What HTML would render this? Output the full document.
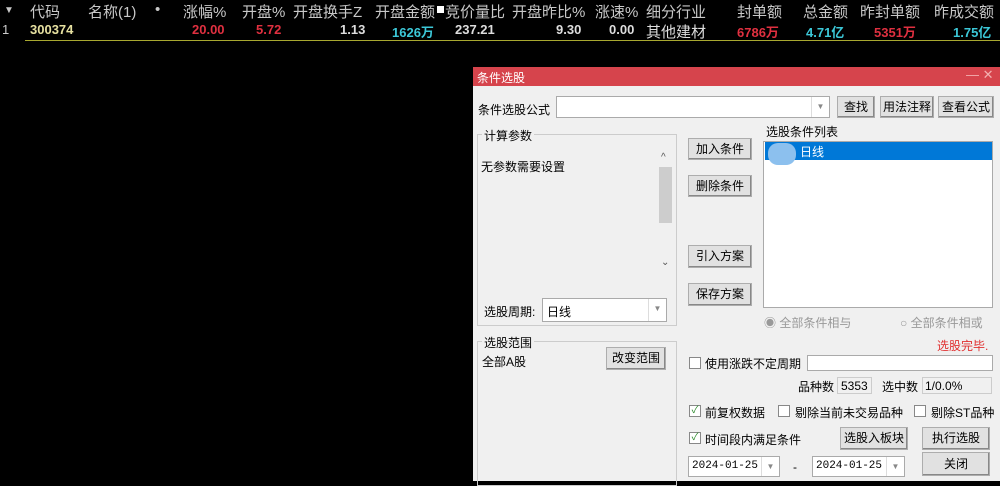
<!DOCTYPE html><html><head><meta charset="utf-8"><style>
*{margin:0;padding:0;box-sizing:border-box}
body{width:1000px;height:481px;background:#000;position:relative;overflow:hidden;font-family:"Liberation Sans","Noto Sans CJK SC",sans-serif}
.a{position:absolute;white-space:nowrap}
.h{color:#c8c8c8;font-size:15px;top:1px}
.r{font-size:13px;top:22px;font-weight:bold}
.d{font-size:12px;color:#000}
.btn{position:absolute;background:#e1e1e1;border:1px solid #adadad;font-size:12px;text-align:center;color:#000;box-shadow:inset -1px -1px 0 #888}
.box{position:absolute;background:#fff;border:1px solid #aaa}
.dd{position:absolute;right:0;top:0;bottom:0;width:18px;border-left:1px solid #ddd;color:#888;font-size:8px;text-align:center;line-height:20px}
.cb{position:absolute;width:12px;height:12px;border:1px solid #888;background:#fff;font-size:10px;color:#2a8a2a;line-height:10px;text-align:center}
.grp{position:absolute;border:1px solid #ccc}
</style></head><body>
<div class="a h" style="left:4px;font-size:10px;top:5px">▼</div>
<div class="a h" style="left:30px">代码</div>
<div class="a h" style="left:88px">名称(1)</div>
<div class="a h" style="left:155px">•</div>
<div class="a h" style="left:183px">涨幅%</div>
<div class="a h" style="left:242px">开盘%</div>
<div class="a h" style="left:293px">开盘换手Z</div>
<div class="a h" style="left:375px">开盘金额</div>
<div class="a" style="left:437px;top:6px;width:7px;height:7px;background:#fff"></div>
<div class="a h" style="left:445px">竞价量比</div>
<div class="a h" style="left:512px">开盘昨比%</div>
<div class="a h" style="left:595px">涨速%</div>
<div class="a h" style="left:646px">细分行业</div>
<div class="a h" style="left:737px">封单额</div>
<div class="a h" style="left:803px">总金额</div>
<div class="a h" style="left:860px">昨封单额</div>
<div class="a h" style="left:934px">昨成交额</div>
<div class="a r" style="left:2px;color:#ccc;font-weight:normal">1</div>
<div class="a r" style="left:30px;color:#e6e0a0">300374</div>
<div class="a r" style="left:192px;color:#e03040">20.00</div>
<div class="a r" style="left:256px;color:#e03040">5.72</div>
<div class="a r" style="left:340px;color:#ddd">1.13</div>
<div class="a r" style="left:392px;color:#3cc8d8">1626万</div>
<div class="a r" style="left:455px;color:#ddd">237.21</div>
<div class="a r" style="left:556px;color:#ddd">9.30</div>
<div class="a r" style="left:609px;color:#ddd">0.00</div>
<div class="a h" style="left:646px;top:21px;color:#ddd">其他建材</div>
<div class="a r" style="left:737px;color:#e03040">6786万</div>
<div class="a r" style="left:806px;color:#3cc8d8">4.71亿</div>
<div class="a r" style="left:874px;color:#e03040">5351万</div>
<div class="a r" style="left:953px;color:#3cc8d8">1.75亿</div>
<div class="a" style="left:25px;top:40px;width:975px;height:1px;background:#a8a830"></div>

<div class="a" style="left:473px;top:67px;width:527px;height:414px;background:#f0f0f0"></div>
<div class="a" style="left:473px;top:67px;width:527px;height:19px;background:#d6444c"></div>
<div class="a" style="left:477px;top:69px;color:#fff;font-size:12px">条件选股</div>
<div class="a" style="left:966px;top:67px;color:#f3b0b0;font-size:13px">— ✕</div>
<div class="a d" style="left:478px;top:101px">条件选股公式</div>
<div class="box" style="left:556px;top:96px;width:274px;height:22px"><div class="dd">▼</div></div>
<div class="btn" style="left:837px;top:96px;width:38px;height:22px;line-height:20px">查找</div>
<div class="btn" style="left:880px;top:96px;width:54px;height:22px;line-height:20px">用法注释</div>
<div class="btn" style="left:938px;top:96px;width:56px;height:22px;line-height:20px">查看公式</div>
<div class="grp" style="left:477px;top:134px;width:200px;height:192px"></div>
<div class="a d" style="left:482px;top:127px;background:#f0f0f0;padding:0 2px">计算参数</div>
<div class="a d" style="left:481px;top:158px">无参数需要设置</div>
<div class="a" style="left:657px;top:150px;width:17px;height:123px;background:#f0f0f0"></div>
<div class="a" style="left:659px;top:167px;width:13px;height:56px;background:#cdcdcd"></div>
<div class="a" style="left:661px;top:152px;font-size:10px;color:#555">^</div>
<div class="a" style="left:661px;top:257px;font-size:10px;color:#555">⌄</div>
<div class="a d" style="left:484px;top:303px">选股周期:</div>
<div class="box" style="left:542px;top:298px;width:125px;height:24px"><div class="a d" style="left:4px;top:4px">日线</div><div class="dd">▼</div></div>
<div class="btn" style="left:688px;top:138px;width:64px;height:22px;line-height:20px">加入条件</div>
<div class="btn" style="left:688px;top:175px;width:64px;height:22px;line-height:20px">删除条件</div>
<div class="btn" style="left:688px;top:245px;width:64px;height:23px;line-height:21px">引入方案</div>
<div class="btn" style="left:688px;top:283px;width:64px;height:23px;line-height:21px">保存方案</div>
<div class="a d" style="left:766px;top:123px">选股条件列表</div>
<div class="box" style="left:763px;top:141px;width:230px;height:167px"></div>
<div class="a" style="left:765px;top:142px;width:227px;height:18px;background:#0078d7"></div>
<div class="a" style="left:768px;top:143px;width:28px;height:22px;border-radius:10px;background:#8cc0ee"></div>
<div class="a" style="left:800px;top:143px;color:#fff;font-size:12px">日线</div>
<div class="a" style="left:764px;top:314px;color:#999;font-size:12px">◉ 全部条件相与</div>
<div class="a" style="left:900px;top:314px;color:#999;font-size:12px">○ 全部条件相或</div>
<div class="a" style="left:937px;top:337px;color:#e03030;font-size:12px">选股完毕.</div>
<div class="grp" style="left:477px;top:341px;width:200px;height:145px"></div>
<div class="a d" style="left:482px;top:334px;background:#f0f0f0;padding:0 2px">选股范围</div>
<div class="a d" style="left:482px;top:353px">全部A股</div>
<div class="btn" style="left:606px;top:347px;width:60px;height:23px;line-height:21px">改变范围</div>
<div class="cb" style="left:689px;top:357px"></div>
<div class="a d" style="left:705px;top:355px">使用涨跌不定周期</div>
<div class="box" style="left:807px;top:355px;width:186px;height:16px"></div>
<div class="a d" style="left:798px;top:378px">品种数</div>
<div class="box" style="left:837px;top:377px;width:35px;height:17px;background:#f0f0f0;border-color:#ccc"><div class="a d" style="left:3px;top:1px">5353</div></div>
<div class="a d" style="left:882px;top:378px">选中数</div>
<div class="box" style="left:922px;top:377px;width:70px;height:17px;background:#f0f0f0;border-color:#ccc"><div class="a d" style="left:2px;top:1px">1/0.0%</div></div>
<div class="cb" style="left:689px;top:405px">✓</div>
<div class="a d" style="left:705px;top:404px">前复权数据</div>
<div class="cb" style="left:778px;top:405px"></div>
<div class="a d" style="left:795px;top:404px">剔除当前未交易品种</div>
<div class="cb" style="left:914px;top:405px"></div>
<div class="a d" style="left:931px;top:404px">剔除ST品种</div>
<div class="cb" style="left:689px;top:432px">✓</div>
<div class="a d" style="left:705px;top:431px">时间段内满足条件</div>
<div class="btn" style="left:840px;top:427px;width:68px;height:23px;line-height:21px">选股入板块</div>
<div class="btn" style="left:922px;top:427px;width:68px;height:23px;line-height:21px">执行选股</div>
<div class="box" style="left:688px;top:456px;width:92px;height:21px"><div class="a d" style="left:3px;top:3px;font-size:11px;font-family:'Liberation Mono',monospace">2024-01-25</div><div class="dd">▼</div></div>
<div class="a d" style="left:793px;top:460px">-</div>
<div class="box" style="left:812px;top:456px;width:93px;height:21px"><div class="a d" style="left:3px;top:3px;font-size:11px;font-family:'Liberation Mono',monospace">2024-01-25</div><div class="dd">▼</div></div>
<div class="btn" style="left:922px;top:452px;width:68px;height:24px;line-height:22px">关闭</div>
</body></html>
